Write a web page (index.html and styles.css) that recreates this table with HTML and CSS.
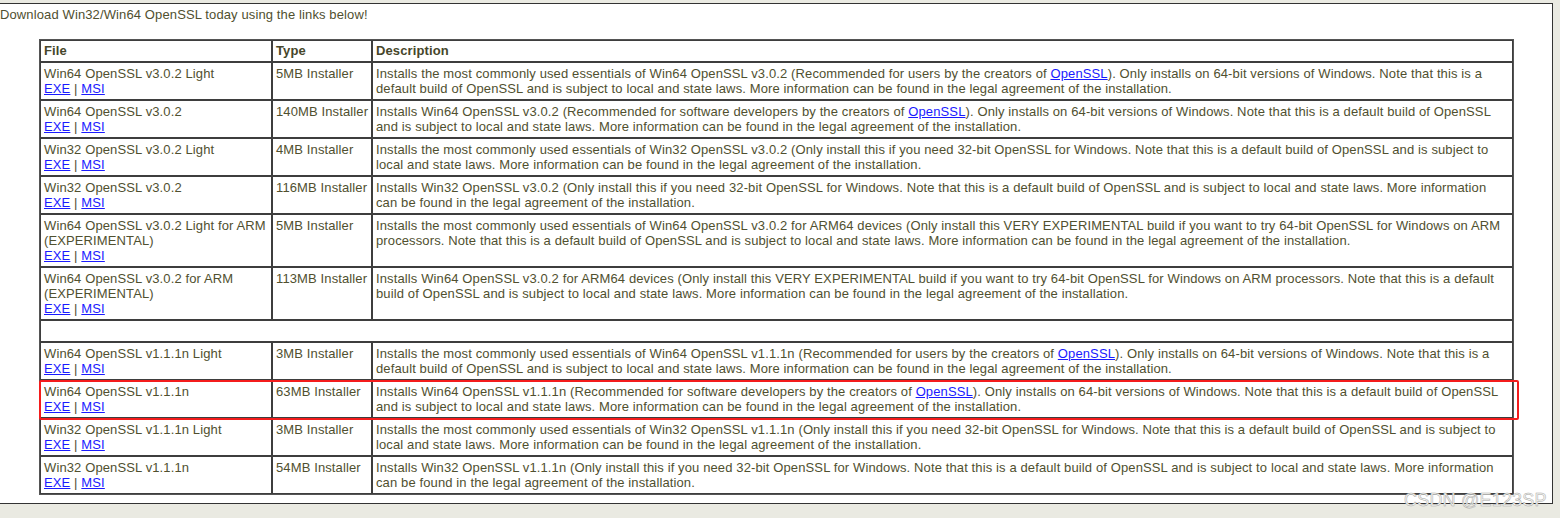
FILE: index.html
```html
<!DOCTYPE html>
<html>
<head>
<meta charset="utf-8">
<title>Win32/Win64 OpenSSL</title>
<link rel="stylesheet" href="styles.css">
</head>
<body>
<div class="panel">
  <p class="intro">Download Win32/Win64 OpenSSL today using the links below!</p>
  <table class="dl">
    <colgroup><col class="c-file"><col class="c-type"><col class="c-desc"></colgroup>
    <tr class="head"><td>File</td><td>Type</td><td>Description</td></tr>
    <tr>
      <td>Win64 OpenSSL v3.0.2 Light<br><a href="#">EXE</a> | <a href="#">MSI</a></td>
      <td>5MB Installer</td>
      <td>Installs the most commonly used essentials of Win64 OpenSSL v3.0.2 (Recommended for users by the creators of <a href="#">OpenSSL</a>). Only installs on 64-bit versions of Windows. Note that this is a default build of OpenSSL and is subject to local and state laws. More information can be found in the legal agreement of the installation.</td>
    </tr>
    <tr>
      <td>Win64 OpenSSL v3.0.2<br><a href="#">EXE</a> | <a href="#">MSI</a></td>
      <td>140MB Installer</td>
      <td>Installs Win64 OpenSSL v3.0.2 (Recommended for software developers by the creators of <a href="#">OpenSSL</a>). Only installs on 64-bit versions of Windows. Note that this is a default build of OpenSSL and is subject to local and state laws. More information can be found in the legal agreement of the installation.</td>
    </tr>
    <tr>
      <td>Win32 OpenSSL v3.0.2 Light<br><a href="#">EXE</a> | <a href="#">MSI</a></td>
      <td>4MB Installer</td>
      <td>Installs the most commonly used essentials of Win32 OpenSSL v3.0.2 (Only install this if you need 32-bit OpenSSL for Windows. Note that this is a default build of OpenSSL and is subject to local and state laws. More information can be found in the legal agreement of the installation.</td>
    </tr>
    <tr>
      <td>Win32 OpenSSL v3.0.2<br><a href="#">EXE</a> | <a href="#">MSI</a></td>
      <td>116MB Installer</td>
      <td>Installs Win32 OpenSSL v3.0.2 (Only install this if you need 32-bit OpenSSL for Windows. Note that this is a default build of OpenSSL and is subject to local and state laws. More information can be found in the legal agreement of the installation.</td>
    </tr>
    <tr>
      <td>Win64 OpenSSL v3.0.2 Light for ARM (EXPERIMENTAL)<br><a href="#">EXE</a> | <a href="#">MSI</a></td>
      <td>5MB Installer</td>
      <td>Installs the most commonly used essentials of Win64 OpenSSL v3.0.2 for ARM64 devices (Only install this VERY EXPERIMENTAL build if you want to try 64-bit OpenSSL for Windows on ARM processors. Note that this is a default build of OpenSSL and is subject to local and state laws. More information can be found in the legal agreement of the installation.</td>
    </tr>
    <tr>
      <td>Win64 OpenSSL v3.0.2 for ARM (EXPERIMENTAL)<br><a href="#">EXE</a> | <a href="#">MSI</a></td>
      <td>113MB Installer</td>
      <td>Installs Win64 OpenSSL v3.0.2 for ARM64 devices (Only install this VERY EXPERIMENTAL build if you want to try 64-bit OpenSSL for Windows on ARM processors. Note that this is a default build of OpenSSL and is subject to local and state laws. More information can be found in the legal agreement of the installation.</td>
    </tr>
    <tr class="spacer"><td colspan="3">&nbsp;</td></tr>
    <tr>
      <td>Win64 OpenSSL v1.1.1n Light<br><a href="#">EXE</a> | <a href="#">MSI</a></td>
      <td>3MB Installer</td>
      <td>Installs the most commonly used essentials of Win64 OpenSSL v1.1.1n (Recommended for users by the creators of <a href="#">OpenSSL</a>). Only installs on 64-bit versions of Windows. Note that this is a default build of OpenSSL and is subject to local and state laws. More information can be found in the legal agreement of the installation.</td>
    </tr>
    <tr class="marked">
      <td>Win64 OpenSSL v1.1.1n<br><a href="#">EXE</a> | <a href="#">MSI</a><span class="redbox"></span></td>
      <td>63MB Installer</td>
      <td>Installs Win64 OpenSSL v1.1.1n (Recommended for software developers by the creators of <a href="#">OpenSSL</a>). Only installs on 64-bit versions of Windows. Note that this is a default build of OpenSSL and is subject to local and state laws. More information can be found in the legal agreement of the installation.</td>
    </tr>
    <tr>
      <td>Win32 OpenSSL v1.1.1n Light<br><a href="#">EXE</a> | <a href="#">MSI</a></td>
      <td>3MB Installer</td>
      <td>Installs the most commonly used essentials of Win32 OpenSSL v1.1.1n (Only install this if you need 32-bit OpenSSL for Windows. Note that this is a default build of OpenSSL and is subject to local and state laws. More information can be found in the legal agreement of the installation.</td>
    </tr>
    <tr>
      <td>Win32 OpenSSL v1.1.1n<br><a href="#">EXE</a> | <a href="#">MSI</a></td>
      <td>54MB Installer</td>
      <td>Installs Win32 OpenSSL v1.1.1n (Only install this if you need 32-bit OpenSSL for Windows. Note that this is a default build of OpenSSL and is subject to local and state laws. More information can be found in the legal agreement of the installation.</td>
    </tr>
  </table>
</div>
<div class="watermark">CSDN @E123SP</div>
</body>
</html>
```

FILE: styles.css
```css
html, body {
  margin: 0;
  padding: 0;
}
body {
  background: #eaeae2;
  font-family: "Liberation Sans", Arial, sans-serif;
  font-size: 13px;
  line-height: 15px;
  letter-spacing: 0.12px;
  color: #50502f;
  padding-top: 3px;
  height: 518px;
  overflow: hidden;
  position: relative;
}
.panel {
  width: 1552px;
  height: 496px;
  background: #fff;
  border-top: 1px solid #333;
  border-right: 1px solid #333;
  border-bottom: 1px solid #333;
  padding-top: 3px;
  box-sizing: content-box;
}
.intro {
  margin: 0 0 17px 0;
}
.dl {
  margin-left: 39px;
  width: 1475px;
  border-collapse: separate;
  border-spacing: 0;
  border: 1px solid #555;
  table-layout: fixed;
}
.c-file { width: 232px; }
.c-type { width: 100px; }
.dl td {
  border: 1px solid #3e3e3e;
  padding: 3px 3px 3px 3px;
  vertical-align: top;
  font-size: 13px;
  line-height: 15px;
}
.dl td:nth-child(2) {
  white-space: nowrap;
  padding-right: 0;
}
.dl .head td {
  font-weight: bold;
  color: #46462a;
  padding: 2px 3px 3px 3px;
}
.dl .spacer td {
  padding: 2px 3px 3px 3px;
}
.dl a {
  color: #1a1aff;
  text-decoration: underline;
}
.marked td:first-child {
  position: relative;
}
.redbox {
  position: absolute;
  left: -2px;
  top: -1px;
  width: 1476px;
  height: 36px;
  border: 2px solid #f41c1c;
  border-radius: 2px;
  pointer-events: none;
}
.watermark {
  position: absolute;
  left: 1404px;
  top: 490px;
  font-family: "Liberation Sans", Arial, sans-serif;
  font-size: 18px;
  line-height: 20px;
  color: #f8f8f5;
  -webkit-text-stroke: 0.5px #a8a8a6;
  letter-spacing: 0.2px;
}
```
